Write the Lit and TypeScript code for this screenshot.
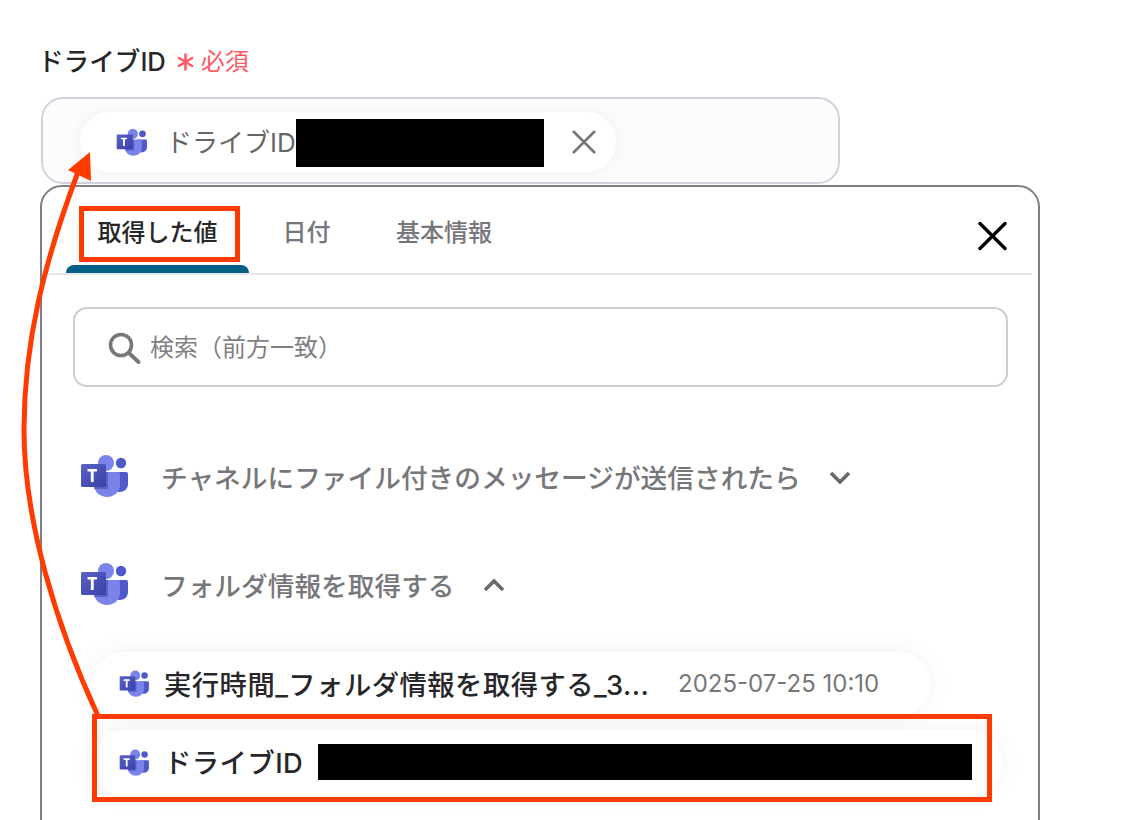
import { LitElement, html, css } from "lit";
import { customElement } from "lit/decorators.js";

const teams = (cls: string) => html`<svg class=${cls} viewBox="0 0 48 45" aria-hidden="true">
  <defs><linearGradient id="tg" x1="0" y1="0" x2="1" y2="1"><stop offset="0" stop-color="#5a62c3"></stop><stop offset="1" stop-color="#3940ab"></stop></linearGradient></defs>
  <circle cx="41" cy="9" r="5.2" fill="#5059c9"></circle>
  <path d="M32 18h14a2 2 0 0 1 2 2v10c0 5-4 8-8.500 8S32 35 32 30z" fill="#5059c9"></path>
  <circle cx="26" cy="9" r="8" fill="#7b83eb"></circle>
  <path d="M14 18h24a2 2 0 0 1 2 2v11c0 7-6 12-13 12s-13-5-13-12z" fill="#7b83eb"></path>
  <path d="M14 18h14v16a1 1 0 0 1-1 1H14z" fill="#3a41a6" opacity=".5"></path>
  <rect x="1" y="10" width="25" height="23" rx="1.500" fill="url(#tg)"></rect>
  <path d="M7.500 15h9.500v2.600h-3.300V28h-2.900V17.600H7.500z" fill="#fff"></path>
</svg>`;

@customElement("app-root")
export class AppRoot extends LitElement {
  static styles = css`
    :host {
      display: block;
      position: relative;
      width: 1126px;
      height: 820px;
      overflow: hidden;
      background: #fff;
      color: #27272a;
      font-family: Inter, "Noto Sans CJK JP", sans-serif;
    }
    .page { padding: 41px 0 0 40px; width: 1000px; display: flex; flex-direction: column; }
    .label { display: flex; align-items: center; height: 36px; font-size: 25.600px; font-weight: 500; margin-left: -2px; white-space: nowrap; }
    .star { width: 17px; height: 18px; margin: 6px 0 0 11px; flex: none; }
    .req { color: #ff5a66; font-size: 24px; font-weight: 400; margin-left: 7px; }
    .field {
      box-sizing: border-box; width: 799px; height: 87px; margin: 20px 0 0 1px;
      border: 2px solid #cfd2de; border-radius: 22px; background: #fcfcfd;
      padding: 13px 0 0 37px;
    }
    .pill {
      box-sizing: border-box; display: flex; align-items: center; background: #fff; border-radius: 32px;
      box-shadow: 0 0 14px rgba(80,80,110,.07);
    }
    .pill-top { width: 536px; height: 60px; padding-left: 36px; font-size: 26px; color: #666; }
    .i-s { width: 31px; height: 29px; flex: none; }
    .i-r { width: 30px; height: 28px; flex: none; }
    .i-l { width: 48px; height: 45px; flex: none; }
    .pill-top .txt { margin: -3px 0 0 19px; white-space: nowrap; width: 130px; }
    .redact { background: #000; flex: none; }
    .r-top { width: 248px; height: 48px; margin-top: 2px; }
    .x { margin-left: 27px; width: 26px; height: 26px; flex: none; }
    .panel {
      box-sizing: border-box; width: 1000px; height: 700px; margin-top: 1px;
      border: 2px solid #808084; border-radius: 22px; background: #fff;
      padding: 0 6px 0 0; display: flex; flex-direction: column;
    }
    .tabs { display: flex; height: 86px; border-bottom: 2px solid #e6e6ea; margin-left: 4px; box-sizing: content-box; }
    .tab { display: flex; align-items: center; justify-content: center; height: 86px; font-size: 24px; font-weight: 500; color: #77777b; box-sizing: border-box; white-space: nowrap; }
    .tab.active { width: 183px; margin-left: 20px; color: #27272a; position: relative; }
    .tab.active::after { content: ""; position: absolute; left: 0; right: 0; bottom: 0; height: 8px; background: #005f86; border-radius: 8px 8px 0 0; }
    .t2 { margin-left: 34px; width: 47px; }
    .t3 { margin-left: 65px; width: 98px; }
    .close { margin: 34px 25px 0 auto; width: 30px; height: 30px; flex: none; }
    .body { padding: 32px 0 0 31px; display: flex; flex-direction: column; }
    .search {
      box-sizing: border-box; width: 935px; height: 80px; border: 2px solid #cdcdd0; border-radius: 14px;
      display: flex; align-items: center; padding-left: 33px; font-size: 24px; color: #7f7f84;
    }
    .search svg { width: 34px; height: 34px; margin-right: 8px; flex: none; }
    .search span { margin-top: -3px; }
    .sec { display: flex; align-items: center; font-size: 26.700px; font-weight: 500; color: #77777b; margin-left: 7px; height: 45px; white-space: nowrap; }
    .sec1 { margin-top: 67px; }
    .sec2 { margin-top: 63px; }
    .sec span { margin-left: 33px; }
    .chev { width: 26px; height: 26px; margin-left: 26px; flex: none; }
    .rows { display: flex; flex-direction: column; margin: 45px 0 0 19px; gap: 14px; }
    .row { height: 64px; padding-left: 27px; font-size: 27.300px; font-weight: 500; color: #27272a; box-shadow: 0 0 22px rgba(80,80,110,.08); white-space: nowrap; }
    .r1 { width: 838px; }
    .r2 { width: 910px; height: 65px; }
    .row .name { margin: -3px 0 0 15px; letter-spacing: .5px; }
    .r1 .name { width: 490px; overflow: hidden; }
    .date { margin: -2px 0 0 24px; font-size: 24px; font-weight: 400; color: #77777b; }
    .r-row { width: 654px; height: 36px; margin: -2px 0 0 15px; }
    .hl-tab { position: absolute; left: 79px; top: 206px; width: 161px; height: 56px; border: 5px solid #ff3b00; box-sizing: border-box; }
    .hl-row { position: absolute; left: 92px; top: 714px; width: 900px; height: 88px; border: 5px solid #ff3b00; box-sizing: border-box; }
    .arrow { position: absolute; left: 0; top: 0; width: 1126px; height: 820px; pointer-events: none; }
  `;

  render() {
    return html`<div class="page">
        <div class="label">ドライブID
          <svg class="star" viewBox="0 0 17 18"><path d="M8.500 0.500v17M1 4.500l15 9M16 4.500l-15 9" stroke="#ff5a66" stroke-width="2.600" fill="none"></path></svg>
          <span class="req">必須</span></div>
        <div class="field">
          <div class="pill pill-top">
            ${teams("i-s")}<span class="txt">ドライブID</span><div class="redact r-top"></div>
            <svg class="x" viewBox="0 0 26 26"><path d="M2 2l22 22M24 2L2 24" stroke="#77777b" stroke-width="2.600" fill="none"></path></svg>
          </div>
        </div>
        <div class="panel">
          <div class="tabs">
            <div class="tab active">取得した値</div>
            <div class="tab t2">日付</div>
            <div class="tab t3">基本情報</div>
            <svg class="close" viewBox="0 0 30 30"><path d="M3 2.500l25 25M28 2.500l-25 25" stroke="#000" stroke-width="3.400" stroke-linecap="round" fill="none"></path></svg>
          </div>
          <div class="body">
            <div class="search">
              <svg viewBox="0 0 34 34"><circle cx="13" cy="15" r="10.500" stroke="#77777b" stroke-width="3.600" fill="none"></circle><path d="M21 23l9.500 9" stroke="#77777b" stroke-width="3.800" stroke-linecap="round"></path></svg>
              <span>検索（前方一致）</span>
            </div>
            <div class="sec sec1">${teams("i-l")}<span>チャネルにファイル付きのメッセージが送信されたら</span>
              <svg class="chev" viewBox="0 0 26 26"><path d="M4 9l9 9 9-9" stroke="#6a6a6e" stroke-width="3.600" fill="none"></path></svg>
            </div>
            <div class="sec sec2">${teams("i-l")}<span>フォルダ情報を取得する</span>
              <svg class="chev" viewBox="0 0 26 26"><path d="M4 18l9-9 9 9" stroke="#6a6a6e" stroke-width="3.600" fill="none"></path></svg>
            </div>
            <div class="rows">
              <div class="pill row r1">${teams("i-r")}<span class="name">実行時間_フォルダ情報を取得する_3...</span><span class="date">2025-07-25 10:10</span></div>
              <div class="pill row r2">${teams("i-r")}<span class="name">ドライブID</span><div class="redact r-row"></div></div>
            </div>
          </div>
        </div>
      </div>
      <div class="hl-tab"></div>
      <div class="hl-row"></div>
      <svg class="arrow" viewBox="0 0 1126 820">
        <path d="M98 716C56 625 24 520 24 430C24 340 45 260 78 172" stroke="#ff3b00" stroke-width="5" fill="none"></path>
        <path d="M90 152L68 170L91 181z" fill="#ff3b00"></path>
      </svg>`;
  }
}
